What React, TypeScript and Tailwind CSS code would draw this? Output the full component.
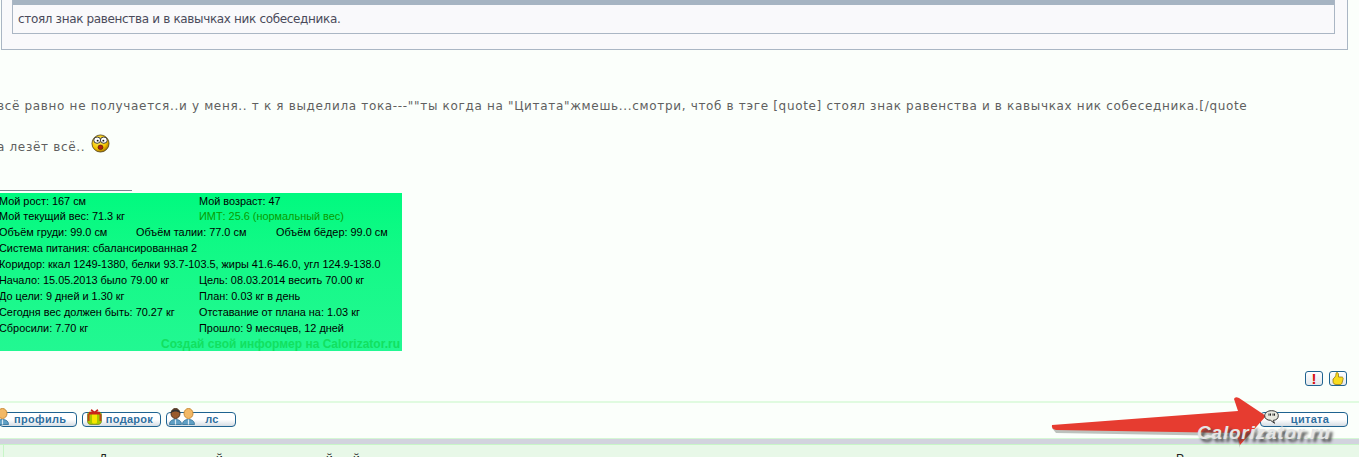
const infoRows = [
  { left: "Мой рост: 167 см", right: "Мой возраст: 47" },
  { left: "Мой текущий вес: 71.3 кг", right: "ИМТ: 25.6 (нормальный вес)", green: true },
  { three: ["Объём груди: 99.0 см", "Объём талии: 77.0 см", "Объём бёдер: 99.0 см"] },
  { wide: "Система питания: сбалансированная 2" },
  { wide: "Коридор: ккал 1249-1380, белки 93.7-103.5, жиры 41.6-46.0, угл 124.9-138.0" },
  { left: "Начало: 15.05.2013 было 79.00 кг", right: "Цель: 08.03.2014 весить 70.00 кг" },
  { left: "До цели: 9 дней и 1.30 кг", right: "План: 0.03 кг в день" },
  { left: "Сегодня вес должен быть: 70.27 кг", right: "Отставание от плана на: 1.03 кг" },
  { left: "Сбросили: 7.70 кг", right: "Прошло: 9 месяцев, 12 дней" },
];

const Person = ({ dark = false }: { dark?: boolean }) => (
  <svg width="13" height="17" viewBox="0 0 13 17" className="shrink-0">
    <path d="M0.500 16.500c0-3.500 2.500-5 6-5s6 1.500 6 5z" fill="#5f9fc4" stroke="#2f6f96" strokeWidth="0.8" />
    <path d="M6.500 11.500v5" stroke="#dbeaf3" strokeWidth="1.200" />
    <ellipse cx="6.500" cy="5.500" rx="4.500" ry="5" fill={dark ? "#9a5a2c" : "#f2b866"} stroke={dark ? "#4d3020" : "#c98a36"} />
    {dark && <path d="M2 5c0-5 9-5 9 0-2.500-2-6.500-2-9 0z" fill="#333" />}
  </svg>
);

const Gift = () => (
  <svg width="15" height="16" viewBox="0 0 15 16" className="shrink-0">
    <path d="M0.500 6c0-2 1-3 3-3h8c2 0 3 1 3 3v6c0 2-1.500 3.500-3.500 3.500h-7C1.500 15.500 0.500 14 0.500 12z" fill="#a8c800" stroke="#5f6a10" strokeWidth="0.6" />
    <path d="M5 5h5v8c0 1-1 1.500-2.500 1.500S5 14 5 13z" fill="#f6e600" />
    <path d="M2 3h11v2.500H2zM4.500 0l3 2.500 3-2.500 1 2-4 2-4-2z" fill="#c8241a" />
    <path d="M0.800 5h1.700v7H0.800zM12.500 5h1.700v7h-1.700z" fill="#c8241a" opacity="0.8" />
  </svg>
);

const Smiley = () => (
  <svg width="19" height="19" viewBox="0 0 20 20">
    <defs>
      <radialGradient id="smiley" cx="40%" cy="35%" r="70%">
        <stop offset="0%" stopColor="#fff26a" />
        <stop offset="65%" stopColor="#f5c400" />
        <stop offset="100%" stopColor="#9a6a00" />
      </radialGradient>
    </defs>
    <circle cx="10" cy="10" r="9" fill="url(#smiley)" stroke="#4a3a10" strokeWidth="0.8" />
    <ellipse cx="6.500" cy="6.500" rx="3.600" ry="3.300" fill="#fff" stroke="#222" strokeWidth="0.9" />
    <ellipse cx="13.500" cy="6.500" rx="3.600" ry="3.300" fill="#fff" stroke="#222" strokeWidth="0.9" />
    <circle cx="7" cy="7" r="1" fill="#111" />
    <circle cx="13" cy="7" r="1" fill="#111" />
    <ellipse cx="10" cy="14" rx="2.600" ry="2.400" fill="#b3200f" stroke="#4a1a08" strokeWidth="0.7" />
  </svg>
);

const QuoteBubble = () => (
  <svg width="15" height="14" viewBox="0 0 15 14">
    <path d="M7.500 0.700c4 0 6.800 2 6.800 5s-2.300 4.600-5 4.600l1.200 3-4-3C3 10.300 0.700 8.600 0.700 5.700s2.800-5 6.800-5z" fill="#e8e8df" stroke="#333" strokeWidth="1" />
    <path d="M5 3.500v2.200M6.500 3.500v2.200M9 3.500v2.200M10.500 3.500v2.200" stroke="#222" strokeWidth="1" />
  </svg>
);

const PillButton = ({ children, className }: { children: React.ReactNode; className: string }) => (
  <div className={`flex h-[15px] items-center rounded-[4px] border border-[#1f6390] bg-gradient-to-b from-white via-white to-[#d5dde4] font-['Liberation_Sans',sans-serif] text-[11px] font-bold tracking-[0.3px] text-[#2f6f9f] ${className}`}>
    {children}
  </div>
);

export default function App() {
  return (
    <div className="flex h-[457px] w-[1359px] flex-col overflow-hidden bg-[#fbfffb] font-['DejaVu_Sans',sans-serif]">
      {/* цитата сверху */}
      <div className="ml-px h-[50px] w-[1347px] shrink-0 border border-t-0 border-[#aab6c4] bg-[#f9f9fb] pl-[10px] pr-[12px]">
        <div className="h-[34px] border border-t-0 border-[#aab6c4]">
          <div className="h-[5px] bg-[#a6b4c2]" />
          <p className="pl-[5px] pt-[5px] text-[12px] leading-[18px] tracking-[-0.34px] text-[#4a4a5a]">
            стоял знак равенства и в кавычках ник собеседника.
          </p>
        </div>
      </div>

      {/* текст сообщения */}
      <p className="mt-[47px] -ml-[3px] whitespace-nowrap text-[12px] leading-[18px] tracking-[0.67px] text-[#5f5f5f]">
        всё равно не получается..и у меня.. т к я выделила тока---""ты когда на "Цитата"жмешь...смотри, чтоб в тэге [quote] стоял знак равенства и в кавычках ник собеседника.[/quote
      </p>
      <div className="mt-[18px] -ml-[3px] flex h-[21px] items-center gap-[6px] text-[12px] tracking-[0.67px] text-[#5f5f5f]">
        <span className="mt-[6px]">а лезёт всё..</span>
        <Smiley />
      </div>

      {/* подпись */}
      <div className="mt-[36px] h-px w-[132px] bg-[#7b8590]" />
      <div className="mt-[2px] h-[158px] w-[402px] shrink-0 overflow-hidden bg-gradient-to-b from-[#00fa7f] to-[#22f892] font-['Liberation_Sans',sans-serif] text-[10.900px] leading-[16px] text-black">
        {infoRows.map((row, i) => (
          <div key={i} className="-ml-px flex h-4 items-center whitespace-nowrap first:h-[15px]">
            {row.three ? (
              <>
                <span className="w-[137px]">{row.three[0]}</span>
                <span className="w-[140px]">{row.three[1]}</span>
                <span>{row.three[2]}</span>
              </>
            ) : row.wide ? (
              <span>{row.wide}</span>
            ) : (
              <>
                <span className="w-[200px]">{row.left}</span>
                <span className={row.green ? "text-[#0a9a00]" : ""}>{row.right}</span>
              </>
            )}
          </div>
        ))}
        <div className="flex h-[15px] justify-end pr-[2px] text-[12px] font-bold text-[#12e060]">
          Создай свой информер на Calorizator.ru
        </div>
      </div>

      {/* жалоба и спасибо */}
      <div className="mt-[20px] flex justify-end gap-[6px] pr-[12px]">
        <div className="flex h-[15px] w-[18px] items-center justify-center rounded-[3px] border border-[#1f6390] bg-gradient-to-b from-white to-[#e4e8ec] font-['Liberation_Sans',sans-serif] text-[15px] font-bold leading-none text-[#d81010]">!</div>
        <div className="flex h-[15px] w-[18px] items-center justify-center rounded-[3px] border border-[#1f6390] bg-gradient-to-b from-white to-[#e4e8ec]">
          <svg width="12" height="13" viewBox="0 0 12 13">
            <path d="M5 0.500c1 0 1.500 1 1.500 2.500v2h3c1.500 0 2 1 1.500 2.500L10 11c-.3 1-1 1.500-2 1.500H4c-1.500 0-3-1-3-3V7c1.500-1 3-3 3-5 0-1 .3-1.500 1-1.500z" fill="#f8dc20" stroke="#8a6a00" strokeWidth="0.7" />
          </svg>
        </div>
      </div>

      {/* кнопки */}
      <div className="mt-[15px] h-[2px] bg-[#e0fbe0]" />
      <div className="mt-[9px] flex h-[15px] items-center justify-between pr-[11px]">
        <div className="flex items-center gap-[5px]">
          <PillButton className="-ml-px w-[78px] pl-[14px]">
            <span>профиль</span>
          </PillButton>
          <PillButton className="w-[79px] justify-center pl-[16px]">
            <span>подарок</span>
          </PillButton>
          <PillButton className="w-[70px] justify-center pl-[22px]">
            <span>лс</span>
          </PillButton>
        </div>
        <PillButton className="w-[88px] justify-center pl-[12px]">
          <span>цитата</span>
        </PillButton>
      </div>

      {/* низ страницы */}
      <div className="mt-[11px] h-px bg-[#d4f8d4]" />
      <div className="h-[5px] shrink-0 bg-[#d2d3de]" />
      <div className="flex min-h-0 flex-1 overflow-hidden border-t border-[#c8f5c8] bg-[#e8f8e8] pl-[3px]">
        <div className="h-full w-px bg-[#c8f5c8]" />
        <div className="ml-[95px] mt-[7px] flex font-['Liberation_Sans',sans-serif] text-[12px] leading-[14px] text-[#222]">
          <span className="w-[117px]">Д</span>
          <span className="w-[110px]">й</span>
          <span className="w-[27px]">й</span>
          <span className="w-[823px]">й</span>
          <span>Р</span>
        </div>
      </div>

      {/* иконки поверх кнопок */}
      <div className="pointer-events-none absolute left-[-4px] top-[408px]"><Person /></div>
      <div className="pointer-events-none absolute left-[87px] top-[409px]"><Gift /></div>
      <div className="pointer-events-none absolute left-[169px] top-[408px] flex"><Person dark /><Person /></div>

      {/* стрелка и водяной знак */}
      <svg className="pointer-events-none absolute left-0 top-0" width="1359" height="457" viewBox="0 0 1359 457">
        <path d="M1052 428 L1238 414 L1240 448 L1236 436 L1056 433z" fill="#8a8f8a" opacity="0.55" />
        <path d="M1052 425 L1238 411 L1234 399 Q1235 396 1239 398 L1266 416 L1240 445 L1236 433 L1056 430 Q1051 429 1052 425z" fill="#e63c30" />
      </svg>
      <div className="pointer-events-none absolute left-[1264px] top-[410px]"><QuoteBubble /></div>
      <span className="pointer-events-none absolute left-[1197px] top-[422px] font-['Liberation_Sans',sans-serif] text-[19px] font-bold italic leading-[22px] tracking-[0.8px] text-[#e5e5e5] [text-shadow:3px_3px_3px_#444]">
        Calorizator.ru
      </span>
    </div>
  );
}
